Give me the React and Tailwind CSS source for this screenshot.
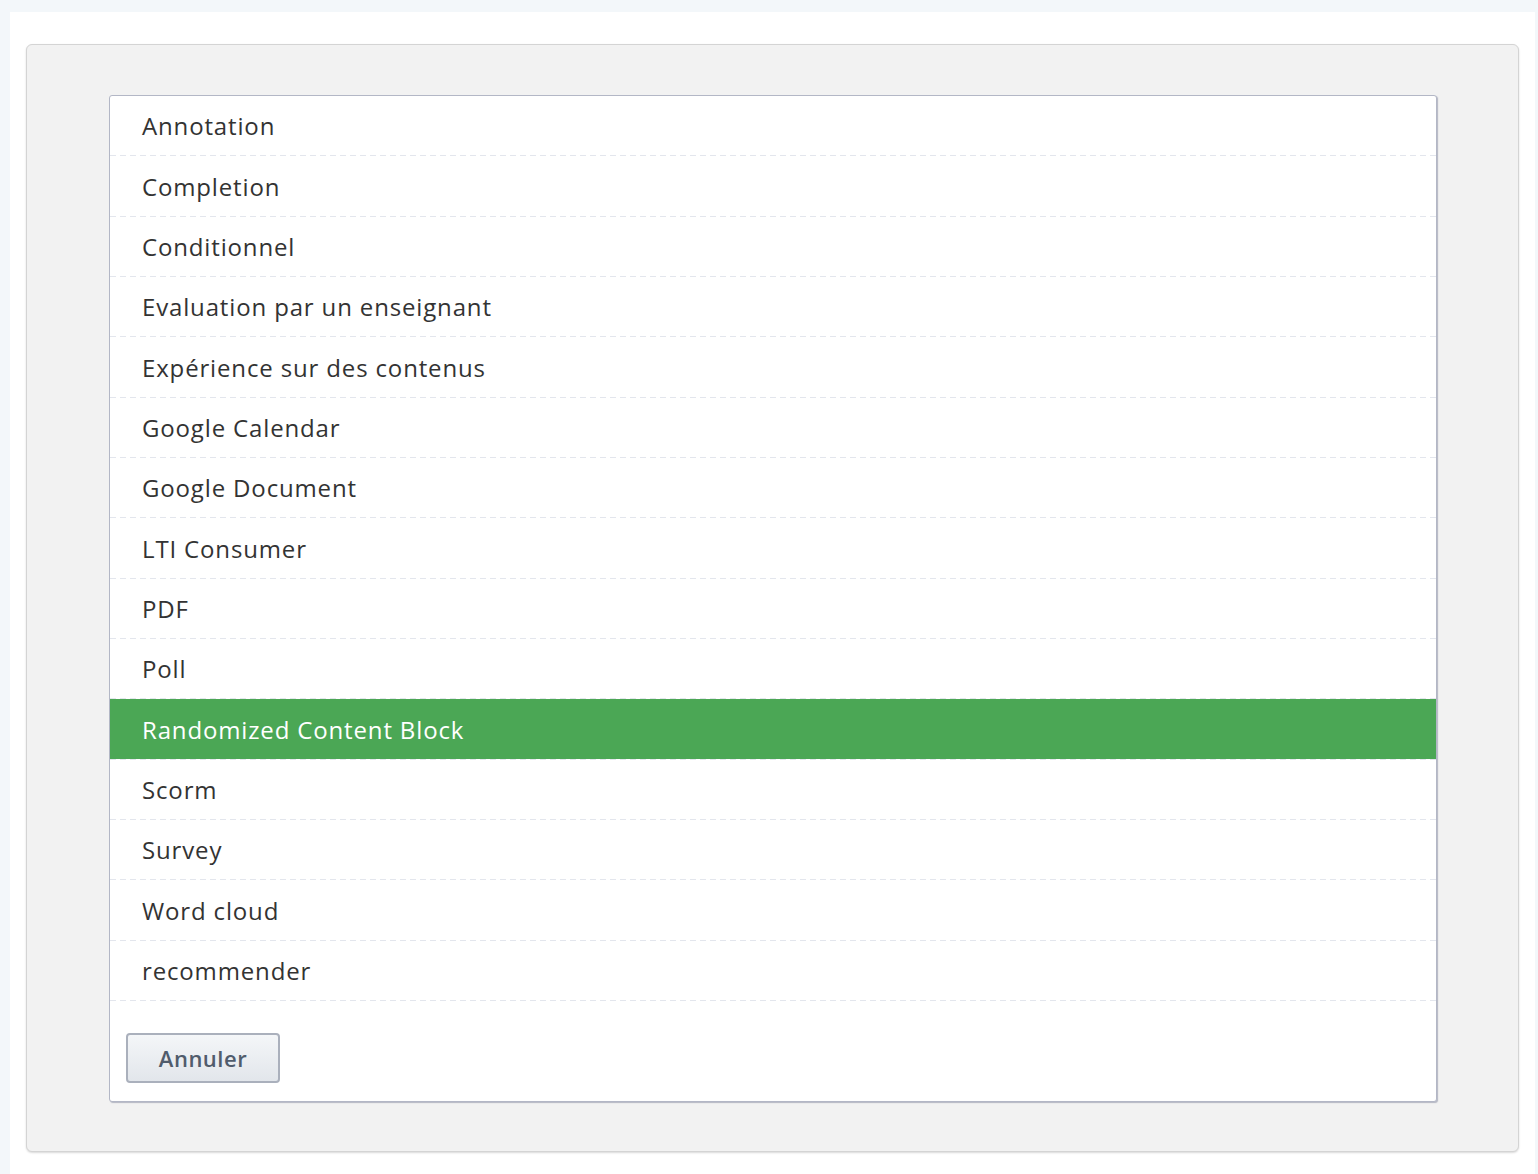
import React from "react";

const items = [
  "Annotation",
  "Completion",
  "Conditionnel",
  "Evaluation par un enseignant",
  "Expérience sur des contenus",
  "Google Calendar",
  "Google Document",
  "LTI Consumer",
  "PDF",
  "Poll",
  "Randomized Content Block",
  "Scorm",
  "Survey",
  "Word cloud",
  "recommender",
];

export default function App() {
  return (
    <div
      className="min-h-[1174px] bg-[#f3f7fa] pl-[10px] pr-[3px] pt-[12px]"
      style={{ fontFamily: '"Open Sans", "Liberation Sans", sans-serif' }}
    >
      <div className="bg-white min-h-[1162px] pl-[16px] pr-[16px] pt-[32px]">
        <div className="bg-[#f2f2f2] rounded-[6px] border border-[#d4d4d4] shadow-[0_1px_2px_rgba(0,0,0,0.15)] h-[1108px] pl-[82px] pr-[81px] pt-[50px]">
          <div className="bg-white border border-[#b3b7c6] rounded-[3px] shadow-[1px_1px_1px_rgba(120,125,150,0.5)] h-[1007px]">
            <ul>
              {items.map((it) => {
                const sel = it === "Randomized Content Block";
                return (
                  <li key={it} className="h-[60.35px] flex flex-col">
                    <div
                      className={
                        "flex-1 flex items-center pl-[32px] pt-[1px] text-[24px] tracking-[0.85px] " +
                        (sel ? "bg-[#4ba755] text-white" : "text-[#333333]")
                      }
                    >
                      {it}
                    </div>
                    <div className="h-px bg-[repeating-linear-gradient(to_right,#e3e6ed_0px,#e3e6ed_6px,transparent_6px,transparent_10px)]" />
                  </li>
                );
              })}
            </ul>
            <div className="pl-[16px] pt-[32px]">
              <button className="w-[154px] h-[50px] rounded-[4px] border-2 border-[#aab0bc] bg-gradient-to-b from-[#f4f6f8] to-[#e2e6eb] text-[#505c6c] font-semibold text-[22px] tracking-[0.5px]">
                Annuler
              </button>
            </div>
          </div>
        </div>
      </div>
    </div>
  );
}
